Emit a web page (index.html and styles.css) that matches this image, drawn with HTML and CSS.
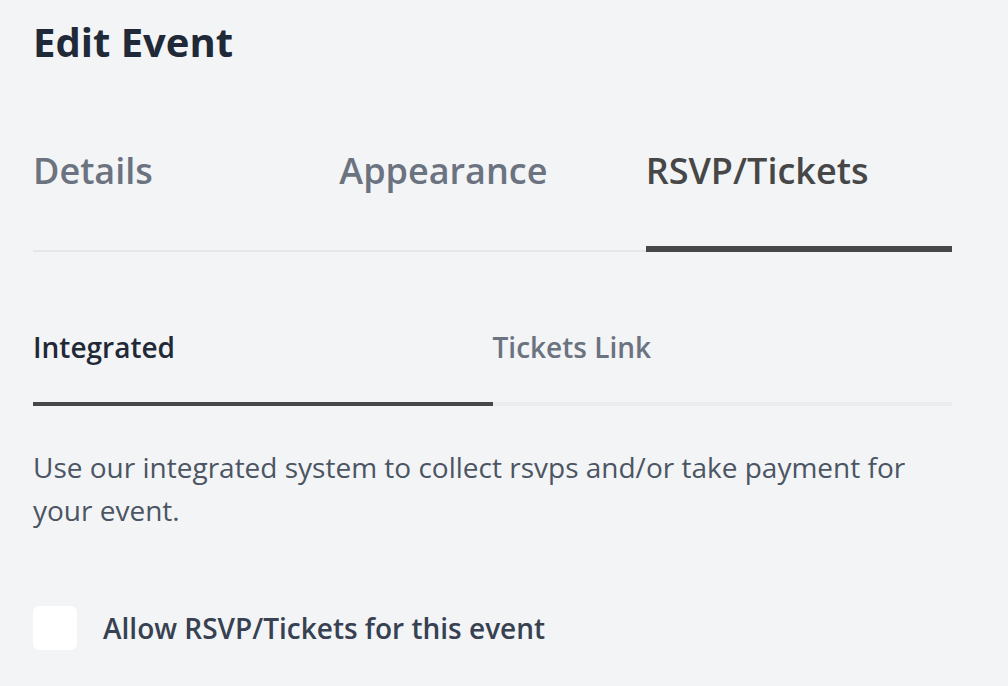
FILE: index.html
```html
<!DOCTYPE html>
<html lang="en">
<head>
<meta charset="utf-8">
<title>Edit Event</title>
<link rel="stylesheet" href="styles.css">
</head>
<body>
<main class="page">
  <h1 class="title">Edit Event</h1>
  <nav class="tabs">
    <div class="tab">Details</div>
    <div class="tab">Appearance</div>
    <div class="tab tab-active">RSVP/Tickets</div>
  </nav>
  <nav class="subtabs">
    <div class="subtab subtab-active">Integrated</div>
    <div class="subtab">Tickets Link</div>
  </nav>
  <p class="desc">Use our integrated system to collect rsvps and/or take payment for your event.</p>
  <label class="check-row">
    <span class="checkbox"></span>
    <span class="check-label">Allow RSVP/Tickets for this event</span>
  </label>
</main>
</body>
</html>
```
FILE: styles.css
```css
html, body {
  margin: 0;
  padding: 0;
  background: #f3f4f6;
}
body {
  font-family: "Open Sans", "Liberation Sans", sans-serif;
  width: 1008px;
  height: 686px;
  overflow: hidden;
}
.page {
  padding: 14px 56px 0 33px;
}
.title {
  margin: 0;
  font-size: 40px;
  line-height: 56px;
  font-weight: 700;
  color: #1f2937;
}
.tabs {
  margin-top: 76px;
  display: grid;
  grid-template-columns: 1fr 1fr 1fr;
  background-image: linear-gradient(#e5e7eb, #e5e7eb);
  background-size: 100% 2px;
  background-position: left bottom;
  background-repeat: no-repeat;
}
.tab {
  font-size: 36px;
  line-height: 50px;
  font-weight: 600;
  color: #6b7280;
  padding-bottom: 50px;
  border-bottom: 6px solid transparent;
}
.tab-active {
  color: #474747;
  border-bottom-color: #474747;
}
.subtabs {
  margin-top: 75px;
  display: grid;
  grid-template-columns: 1fr 1fr;
}
.subtab {
  font-size: 28px;
  line-height: 40px;
  font-weight: 600;
  color: #6b7280;
  padding-bottom: 35px;
  border-bottom: 4px solid #ececec;
}
.subtab-active {
  color: #1f2937;
  border-bottom-color: #474747;
}
.desc {
  margin: 40px 0 0;
  font-size: 28px;
  line-height: 43px;
  color: #4b5563;
}
.check-row {
  margin-top: 74px;
  display: flex;
  align-items: center;
  gap: 26px;
}
.checkbox {
  width: 44px;
  height: 44px;
  border-radius: 6px;
  background: #ffffff;
  flex: none;
}
.check-label {
  font-size: 28px;
  line-height: 40px;
  font-weight: 600;
  color: #374151;
}
```
